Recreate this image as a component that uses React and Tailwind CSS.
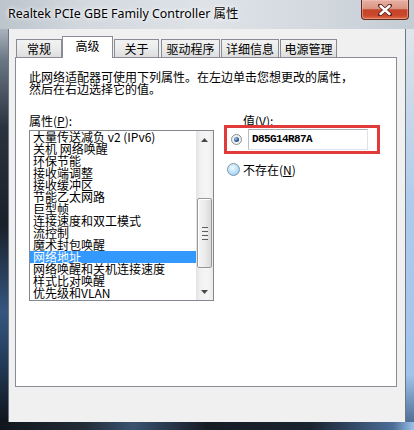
import React from "react";

const items = [
  "大量传送减负 v2 (IPv6)",
  "关机 网络唤醒",
  "环保节能",
  "接收端调整",
  "接收缓冲区",
  "节能乙太网路",
  "巨型帧",
  "连接速度和双工模式",
  "流控制",
  "魔术封包唤醒",
  "网络地址",
  "网络唤醒和关机连接速度",
  "样式比对唤醒",
  "优先级和VLAN",
];

function Tab({ label, selected, className }) {
  if (selected) {
    return (
      <div
        className={`relative z-10 -mb-px h-[22px] border border-b-0 border-[#898c95] bg-white pt-[3px] text-center leading-[12px] ${className}`}
      >
        {label}
      </div>
    );
  }
  return (
    <div
      className={`h-[18px] border border-b-0 border-[#898c95] bg-[linear-gradient(180deg,#f2f2f2_0%,#ebebeb_50%,#dddddd_100%)] pt-[3px] text-center leading-[12px] ${className}`}
    >
      {label}
    </div>
  );
}

function UpArrow() {
  return (
    <svg width="7" height="4" viewBox="0 0 7 4">
      <path d="M0 4 L3.5 0 L7 4 Z" fill="#4a4a4a" />
    </svg>
  );
}

function DownArrow() {
  return (
    <svg width="7" height="4" viewBox="0 0 7 4">
      <path d="M0 0 L3.5 4 L7 0 Z" fill="#4a4a4a" />
    </svg>
  );
}

export default function App() {
  return (
    <div className="flex h-[430px] w-[414px] flex-col overflow-hidden font-['Noto_Sans_CJK_SC',sans-serif] text-[12px] text-black">
      {/* Title bar */}
      <div className="flex h-[29px] shrink-0 items-start bg-[linear-gradient(90deg,#bcc4cc_0%,#d2d8de_20%,#dfe3e8_50%,#d3d9df_75%,#c4ccd4_100%)]">
        <div className="pl-[8px] pt-[5px] font-['Noto_Sans','Noto_Sans_CJK_SC',sans-serif] text-[12.4px] leading-[18px] text-black [text-shadow:0_0_6px_#ffffff,0_0_3px_#ffffff]">
          Realtek PCIe GBE Family Controller 属性
        </div>
        <div className="ml-auto mr-[5px] flex h-[20px] w-[48px] items-center justify-center rounded-b-[4px] border border-t-0 border-[#5e2b22] bg-[linear-gradient(180deg,#e6b1a4_0%,#d99582_45%,#c4432b_52%,#c9472c_80%,#e06a44_100%)] shadow-[inset_0_0_0_1px_rgba(255,200,190,0.45)]">
          <svg width="14" height="12" viewBox="0 0 14 12">
            <path d="M2 1.5 L12 10.5 M12 1.5 L2 10.5" stroke="#5a1e16" strokeWidth="4" strokeLinecap="round" />
            <path d="M2.5 2 L11.5 10 M11.5 2 L2.5 10" stroke="#ffffff" strokeWidth="2.4" strokeLinecap="round" />
          </svg>
        </div>
      </div>

      <div className="flex flex-1">
        {/* left frame */}
        <div className="w-[8px] bg-[linear-gradient(180deg,#aab3bd_0%,#6a7683_8%,#2a323d_25%,#1a212b_50%,#36567f_72%,#233a58_85%,#10151c_100%)]" />

        {/* client */}
        <div className="flex flex-1 flex-col border-x border-[#6b7785] bg-[#f0f0f0] pl-[6px] pt-[7px]">
          {/* tabs */}
          <div className="flex h-[21px] items-end pl-[1px]">
            <Tab label="常规" className="w-[46px]" />
            <Tab label="高级" selected className="w-[51px]" />
            <Tab label="关于" className="ml-[1px] w-[45px]" />
            <Tab label="驱动程序" className="ml-[2px] w-[59px]" />
            <Tab label="详细信息" className="ml-[1px] w-[58px]" />
            <Tab label="电源管理" className="ml-[1px] w-[57px]" />
          </div>

          {/* panel */}
          <div className="relative z-0 h-[330px] w-[382px] border border-[#898c95] bg-white pl-[13px] pt-[13px]">
            <div className="whitespace-nowrap leading-[12px]">
              此网络适配器可使用下列属性。在左边单击您想更改的属性，
              <br />
              然后在右边选择它的值。
            </div>

            <div className="mt-[20px] flex gap-[10px]">
              {/* left column */}
              <div className="flex w-[185px] flex-col">
                <div className="leading-[12px]">
                  属性(<span className="underline">P</span>):
                </div>
                <div className="mt-[3px] flex h-[171px] w-[185px] border border-[#828790] bg-white">
                  <div className="flex flex-1 flex-col">
                    {items.map((it, i) => (
                      <div
                        key={it}
                        className={`h-[12px] whitespace-nowrap pl-[3px] leading-[12px] ${
                          i === 10 ? "bg-[#3399ff] text-white" : "text-black"
                        }`}
                      >
                        {it}
                      </div>
                    ))}
                  </div>
                  {/* scrollbar */}
                  <div className="flex w-[17px] flex-col bg-[linear-gradient(90deg,#e3e3e3_0%,#f2f2f2_30%,#f5f5f5_70%,#eaeaea_100%)]">
                    <div className="flex h-[17px] items-center justify-center">
                      <UpArrow />
                    </div>
                    <div className="flex-1">
                      <div className="ml-[1px] mt-[50px] flex h-[70px] w-[15px] flex-col items-center justify-center gap-[1px] rounded-[2px] border border-[#979797] bg-[linear-gradient(90deg,#f4f4f4_0%,#ececec_50%,#d9d9d9_100%)] shadow-[inset_1px_1px_0_#ffffff]">
                        <div className="h-px w-[6px] bg-[#5f5f5f]" />
                        <div className="h-px w-[6px] bg-[#f6f6f6]" />
                        <div className="h-px w-[6px] bg-[#5f5f5f]" />
                        <div className="h-px w-[6px] bg-[#f6f6f6]" />
                        <div className="h-px w-[6px] bg-[#5f5f5f]" />
                        <div className="h-px w-[6px] bg-[#f6f6f6]" />
                        <div className="h-px w-[6px] bg-[#5f5f5f]" />
                      </div>
                    </div>
                    <div className="flex h-[17px] items-center justify-center">
                      <DownArrow />
                    </div>
                  </div>
                </div>
              </div>

              {/* right column */}
              <div className="flex flex-col">
                <div className="pl-[19px] leading-[12px]">
                  值(<span className="underline">V</span>):
                </div>
                <div className="-mt-[2px] flex h-[29px] w-[156px] items-start border-[3px] border-[#e03a3a]">
                  <div className="ml-[4px] mt-[6px] flex h-[11px] w-[11px] items-center justify-center rounded-full border border-[#8e9094] bg-[radial-gradient(circle,#ffffff_0%,#e4e4e4_100%)]">
                    <div className="h-[5px] w-[5px] rounded-full bg-[radial-gradient(circle_at_35%_35%,#9cc8f2_0%,#2a5c96_55%,#17345a_100%)]" />
                  </div>
                  <div className="ml-[6px] mt-px flex h-[21px] w-[120px] items-center border border-[#dde2e8] border-t-[#abadb3] border-l-[#b8bcc4] bg-white pl-[3px] font-['Liberation_Mono',monospace] text-[11px] font-bold tracking-[-0.6px] text-black">
                    D85G14R87A
                  </div>
                </div>
                <div className="mt-[9px] flex items-center">
                  <div className="ml-[3px] h-[13px] w-[13px] rounded-full border border-[#7d93aa] bg-[radial-gradient(circle_at_40%_35%,#f2faff_0%,#b9e0f8_55%,#7fbde9_100%)]" />
                  <div className="ml-[3px] leading-[12px]">
                    不存在(<span className="underline">N</span>)
                  </div>
                </div>
              </div>
            </div>
          </div>
        </div>

        {/* right frame */}
        <div className="w-[8px] bg-[linear-gradient(180deg,#dfe5eb_0%,#cddbea_15%,#aecbec_45%,#a2c4ea_88%,#4f6f95_100%)]" />
      </div>

      {/* bottom frame */}
      <div className="h-[8px] shrink-0 bg-[linear-gradient(90deg,#11161d_0%,#222b36_20%,#3a5270_32%,#161c24_50%,#1a2330_75%,#4b6d98_95%,#9cc0ea_100%)]" />
    </div>
  );
}
